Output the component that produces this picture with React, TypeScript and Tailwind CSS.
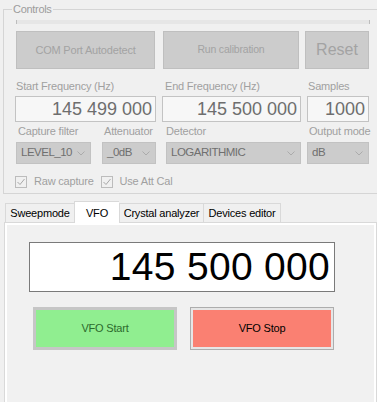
import { ReactNode } from "react";

function Chevron() {
  return (
    <svg width="8" height="5" viewBox="0 0 8 5" className="shrink-0">
      <polyline points="0.5,0.5 4,4 7.5,0.5" fill="none" stroke="#ababab" strokeWidth="1" />
    </svg>
  );
}

function Combo({ value, w }: { value: string; w: string }) {
  return (
    <div
      className={`${w} h-[22px] flex items-center justify-between pl-[4px] pr-[5px] bg-[#cccccc] border border-[#c2c2c2] text-[11.5px] tracking-[-0.5px] text-[#6f6f6f]`}
    >
      <span>{value}</span>
      <Chevron />
    </div>
  );
}

function Check({ label }: { label: string }) {
  return (
    <div className="flex items-center h-[13px]">
      <div className="w-[12px] h-[12px] border border-[#bcbcbc] bg-[#f0f0f0] flex items-center justify-center">
        <svg width="10" height="10" viewBox="0 0 10 10">
          <polyline points="1.5,5 4,7.5 8.5,2" fill="none" stroke="#a8a8a8" strokeWidth="1" />
        </svg>
      </div>
      <span className="ml-[7px] text-[11px] tracking-[-0.2px] text-[#a0a0a0]">{label}</span>
    </div>
  );
}

function Tab({ children, w, active }: { children: ReactNode; w: string; active?: boolean }) {
  return active ? (
    <div
      className={`${w} h-[22px] bg-white border-t border-l border-[#d9d9d9] -mb-px relative z-10 flex justify-center pt-[3px] text-[11px] tracking-[-0.2px] text-black`}
    >
      {children}
    </div>
  ) : (
    <div
      className={`${w} h-[19px] bg-[#f0f0f0] border-t border-l border-[#d9d9d9] flex justify-center items-center text-[11px] tracking-[-0.2px] text-black`}
    >
      {children}
    </div>
  );
}

export default function App() {
  return (
    <div className="w-[377px] h-[402px] overflow-hidden bg-[#f0f0f0] font-['Liberation_Sans',Arial,sans-serif]">
      {/* Controls group */}
      <div className="relative ml-[3px] mt-[9px] w-[374px] h-[185px] border-t border-l border-b border-[#d5d5d5]">
        <span className="absolute -top-[8px] left-[8px] px-[1px] bg-[#f0f0f0] text-[11px] tracking-[-0.3px] text-[#9c9c9c] leading-[14px]">
          Controls
        </span>

        <div className="ml-[12px] mt-[10px] w-[354px] h-[4px] bg-[#e6e6e6] border-x border-[#bdbdbd]" />

        <div className="flex mt-[7px] ml-[12px]">
          <div className="w-[139px] h-[38px] bg-[#cccccc] border border-[#bfbfbf] flex items-center justify-center text-[11px] tracking-[-0.2px] text-[#a3a3a3]">
            COM Port Autodetect
          </div>
          <div className="ml-[8px] w-[136px] h-[38px] bg-[#cccccc] border border-[#bfbfbf] flex items-center justify-center text-[10.5px] tracking-[-0.2px] text-[#a3a3a3]">
            Run calibration
          </div>
          <div className="ml-[6px] w-[64px] h-[38px] bg-[#cccccc] border border-[#bfbfbf] flex items-center justify-center text-[16px] text-[#a3a3a3]">
            Reset
          </div>
        </div>

        {/* frequency row */}
        <div className="flex mt-[11px] ml-[11px] text-[11px] tracking-[-0.2px] text-[#a0a0a0]">
          <div className="w-[141px]">
            <div className="h-[13px] leading-[13px] pl-[1px]">Start Frequency (Hz)</div>
            <div className="mt-[3px] h-[26px] bg-[#f7f7f7] border border-[#c3c3c3] flex items-center justify-end pr-[3px] text-[18px] tracking-normal text-[#6e6e6e]">
              145 499 000
            </div>
          </div>
          <div className="ml-[6px] w-[139px]">
            <div className="h-[13px] leading-[13px] pl-[3px]">End Frequency (Hz)</div>
            <div className="mt-[3px] h-[26px] bg-[#f7f7f7] border border-[#c3c3c3] flex items-center justify-end pr-[3px] text-[18px] tracking-normal text-[#6e6e6e]">
              145 500 000
            </div>
          </div>
          <div className="ml-[6px] w-[62px]">
            <div className="h-[13px] leading-[13px] pl-[1px]">Samples</div>
            <div className="mt-[3px] h-[26px] bg-[#f7f7f7] border border-[#c3c3c3] flex items-center justify-end pr-[3px] text-[18px] tracking-normal text-[#6e6e6e]">
              1000
            </div>
          </div>
        </div>

        {/* combo row */}
        <div className="flex mt-[3px] ml-[12px] text-[11px] tracking-[-0.2px] text-[#a0a0a0]">
          <div className="w-[75px]">
            <div className="h-[13px] leading-[13px] pl-[2px]">Capture filter</div>
            <div className="mt-[4px]">
              <Combo value="LEVEL_10" w="w-[75px]" />
            </div>
          </div>
          <div className="ml-[11px] w-[54px]">
            <div className="h-[13px] leading-[13px] pl-[2px]">Attenuator</div>
            <div className="mt-[4px]">
              <Combo value="_0dB" w="w-[54px]" />
            </div>
          </div>
          <div className="ml-[10px] w-[135px]">
            <div className="h-[13px] leading-[13px]">Detector</div>
            <div className="mt-[4px]">
              <Combo value="LOGARITHMIC" w="w-[135px]" />
            </div>
          </div>
          <div className="ml-[6px] w-[62px]">
            <div className="h-[13px] leading-[13px] pl-[2px] whitespace-nowrap">Output mode</div>
            <div className="mt-[4px]">
              <Combo value="dB" w="w-[62px]" />
            </div>
          </div>
        </div>

        <div className="flex mt-[11px] ml-[11px] gap-[7px]">
          <Check label="Raw capture" />
          <Check label="Use Att Cal" />
        </div>
      </div>

      {/* tabs */}
      <div className="flex items-end ml-[5px] mt-[7px]">
        <Tab w="w-[69px]">Sweepmode</Tab>
        <Tab w="w-[45px]" active>
          VFO
        </Tab>
        <Tab w="w-[84px]">Crystal analyzer</Tab>
        <div className="border-r border-[#d9d9d9]">
          <Tab w="w-[77px]">Devices editor</Tab>
        </div>
      </div>

      <div className="ml-[4px] w-[373px] h-[200px] border border-[#d9d9d9] bg-white p-[2px]">
        <div className="h-full bg-[#f1f1f1] pt-[17px]">
          <div className="ml-[22px] w-[306px] h-[50px] bg-white border border-[#7a7a7a] flex items-center justify-end pr-[4px] text-[39px] tracking-[0.3px] text-black">
            145 500 000
          </div>
          <div className="flex mt-[15px] ml-[26px]">
            <div className="w-[144px] h-[43px] border-[3px] border-[#c6c6c6] bg-[#90ee90] flex items-center justify-center text-[11px] tracking-[-0.2px] text-[#2c6a2c]">
              VFO Start
            </div>
            <div className="ml-[13px] w-[144px] h-[43px] border border-[#adadad] p-[2px] bg-[#e6e6e6]">
              <div className="w-full h-full bg-[#fa8072] flex items-center justify-center text-[11px] tracking-[-0.2px] text-black">
                VFO Stop
              </div>
            </div>
          </div>
        </div>
      </div>
    </div>
  );
}
